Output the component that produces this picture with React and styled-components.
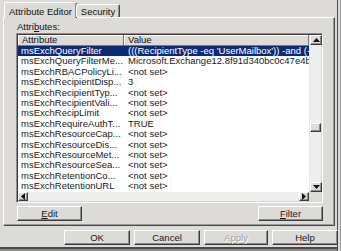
import React from "react";
import styled, { createGlobalStyle } from "styled-components";

const GlobalStyle = createGlobalStyle`
  body {
    margin: 0;
    background: #ffffff;
  }
`;

const Dialog = styled.div`
  width: 341px;
  height: 251px;
  box-sizing: border-box;
  background: #dcdbd8;
  font-family: "Liberation Sans", Arial, sans-serif;
  font-size: 9.5px;
  color: #111;
  display: flex;
  flex-direction: column;
  padding: 2px 6px 0 3px;
  box-shadow: inset -1px 0 #9a9a9a, inset -3px 0 #dcdbd8, inset -4px 0 #4a4a4a,
    inset 0 -2px #8a8a8a, inset 0 -4px #4a4a4a;
  overflow: hidden;
`;

const TabStrip = styled.div`
  display: flex;
  align-items: flex-end;
  padding-left: 1px;
  height: 15px;
  position: relative;
  z-index: 1;
`;

const Tab = styled.div`
  box-sizing: border-box;
  height: ${(p) => (p.$active ? "16px" : "13px")};
  margin-bottom: ${(p) => (p.$active ? "-1px" : "0")};
  padding: ${(p) => (p.$active ? "3px 4px 0 4px" : "1px 4px 0 4px")};
  margin-left: ${(p) => (p.$active ? "0" : "-1px")};
  background: #dcdbd8;
  border: 1px solid #ffffff;
  border-bottom: none;
  border-right: 1px solid #444;
  border-radius: 2px 2px 0 0;
  box-shadow: inset -1px 0 #909090;
  white-space: nowrap;
`;

const Panel = styled.div`
  box-sizing: border-box;
  height: 209px;
  border: 1px solid;
  border-color: #ffffff #4a4a4a #4a4a4a #ffffff;
  box-shadow: inset -1px -1px #9a9a9a;
  padding: 4px 11px 0 12px;
  display: flex;
  flex-direction: column;
`;

const Label = styled.div`
  height: 10px;
  line-height: 10px;
  margin-left: 1px;
`;

const Key = styled.span`
  text-decoration: underline;
  text-underline-offset: 1px;
`;

const ListBox = styled.div`
  box-sizing: border-box;
  margin-top: 1px;
  height: 170px;
  border: 1px solid;
  border-color: #8c8c8c #ffffff #ffffff #8c8c8c;
  box-shadow: inset 1px 1px #3c3c3c, inset -1px -1px #d6d5d2;
  background: #ffffff;
  display: grid;
  grid-template-columns: 1fr 12px;
  grid-template-rows: 1fr 9px;
  padding: 1px;
  overflow: hidden;
`;

const Table = styled.div`
  overflow: hidden;
  display: flex;
  flex-direction: column;
`;

const HeaderRow = styled.div`
  display: grid;
  grid-template-columns: 106px 1fr;
  height: 11px;
  flex: none;
`;

const HeaderCell = styled.div`
  box-sizing: border-box;
  background: #dcdbd8;
  border-right: 1px solid #7a7a7a;
  border-bottom: 1px solid #7a7a7a;
  box-shadow: inset 1px 1px #ffffff;
  padding-left: 4px;
  line-height: 10px;
  white-space: nowrap;
`;

const Row = styled.div`
  display: grid;
  grid-template-columns: 106px 1fr;
  height: 10.4px;
  line-height: 10.4px;
  flex: none;
  white-space: nowrap;
  color: ${(p) => (p.$selected ? "#ffffff" : "#1a1a1a")};
`;

const Cell = styled.div`
  overflow: hidden;
  padding-left: ${(p) => (p.$value ? "4px" : "3px")};
  background: ${(p) => (p.$selected ? "#0c2a76" : "transparent")};
`;

const VScroll = styled.div`
  background: #eeeeec;
  display: flex;
  flex-direction: column;
  border-left: 1px solid #e4e4e4;
`;

const HScroll = styled.div`
  background: #eeeeec;
  display: flex;
  align-items: stretch;
  justify-content: space-between;
`;

const Corner = styled.div`
  background: #dcdbd8;
`;

const ArrowButton = styled.div`
  box-sizing: border-box;
  width: ${(p) => p.$w || "12px"};
  height: ${(p) => p.$h || "10px"};
  flex: none;
  background: #dcdbd8;
  border: 1px solid;
  border-color: #ffffff #3c3c3c #3c3c3c #ffffff;
  box-shadow: inset -1px -1px #8c8c8c;
  display: flex;
  align-items: center;
  justify-content: center;
`;

const Track = styled.div`
  flex: 1;
  display: flex;
  flex-direction: column;
  align-items: stretch;
  padding-top: ${(p) => p.$offset}px;
`;

const Thumb = styled.div`
  box-sizing: border-box;
  height: 9px;
  background: #dcdbd8;
  border: 1px solid;
  border-color: #ffffff #3c3c3c #3c3c3c #ffffff;
  box-shadow: inset -1px -1px #8c8c8c;
`;

const ButtonRow = styled.div`
  display: flex;
  justify-content: space-between;
  margin-top: 3px;
  padding-left: 1px;
`;

const Button = styled.div`
  box-sizing: border-box;
  width: ${(p) => p.$w || "65px"};
  height: 15px;
  background: #dcdbd8;
  border: 1px solid;
  border-color: #ffffff #3a3a3a #3a3a3a #ffffff;
  box-shadow: inset -1px -1px #8a8a8a;
  display: flex;
  align-items: center;
  justify-content: center;
  color: ${(p) => (p.$disabled ? "#a3a3a3" : "#1a1a1a")};
  text-shadow: ${(p) => (p.$disabled ? "1px 1px #ffffff" : "none")};
`;

const Footer = styled.div`
  display: flex;
  justify-content: flex-end;
  gap: 4px;
  margin-top: 4px;
  margin-right: -3px;
`;

const Arrow = ({ dir }) => {
  const pts = {
    up: "0,4 3.5,0 7,4",
    down: "0,0 3.5,4 7,0",
    left: "4,0 0,3.5 4,7",
    right: "0,0 4,3.5 0,7",
  }[dir];
  const vertical = dir === "up" || dir === "down";
  return (
    <svg width={vertical ? 7 : 4} height={vertical ? 4 : 7} viewBox={vertical ? "0 0 7 4" : "0 0 4 7"}>
      <polygon points={pts} fill="#111" />
    </svg>
  );
};

const rows = [
  ["msExchQueryFilter", "(((RecipientType -eq 'UserMailbox')) -and (-not(Name -like 'SystemMailbox{*'))"],
  ["msExchQueryFilterMe...", "Microsoft.Exchange12.8f91d340bc0c47e4b4c3fa"],
  ["msExchRBACPolicyLi...", "<not set>"],
  ["msExchRecipientDisp...", "3"],
  ["msExchRecipientTyp...", "<not set>"],
  ["msExchRecipientVali...", "<not set>"],
  ["msExchRecipLimit", "<not set>"],
  ["msExchRequireAuthT...", "TRUE"],
  ["msExchResourceCap...", "<not set>"],
  ["msExchResourceDis...", "<not set>"],
  ["msExchResourceMet...", "<not set>"],
  ["msExchResourceSea...", "<not set>"],
  ["msExchRetentionCo...", "<not set>"],
  ["msExchRetentionURL", "<not set>"],
  ["msExchRMSTemplat...", "<not set>"],
];

export default function App() {
  return (
    <>
      <GlobalStyle />
      <Dialog>
        <TabStrip>
          <Tab $active>Attribute Editor</Tab>
          <Tab>Security</Tab>
        </TabStrip>
        <Panel>
          <Label>
            Attri<Key>b</Key>utes:
          </Label>
          <ListBox>
            <Table>
              <HeaderRow>
                <HeaderCell>Attribute</HeaderCell>
                <HeaderCell>Value</HeaderCell>
              </HeaderRow>
              {rows.map(([name, value], i) => (
                <Row key={name} $selected={i === 0}>
                  <Cell $selected={i === 0}>{name}</Cell>
                  <Cell $value $selected={i === 0}>{value}</Cell>
                </Row>
              ))}
            </Table>
            <VScroll>
              <ArrowButton>
                <Arrow dir="up" />
              </ArrowButton>
              <Track $offset={78}>
                <Thumb />
              </Track>
              <ArrowButton>
                <Arrow dir="down" />
              </ArrowButton>
            </VScroll>
            <HScroll>
              <ArrowButton $w="10px" $h="9px">
                <Arrow dir="left" />
              </ArrowButton>
              <ArrowButton $w="10px" $h="9px">
                <Arrow dir="right" />
              </ArrowButton>
            </HScroll>
            <Corner />
          </ListBox>
          <ButtonRow>
            <Button>
              <span>
                <Key>E</Key>dit
              </span>
            </Button>
            <Button>
              <span>
                <Key>F</Key>ilter
              </span>
            </Button>
          </ButtonRow>
        </Panel>
        <Footer>
          <Button $w="66px">OK</Button>
          <Button $w="66px">Cancel</Button>
          <Button $w="64px" $disabled>
            Apply
          </Button>
          <Button $w="66px">Help</Button>
        </Footer>
      </Dialog>
    </>
  );
}
